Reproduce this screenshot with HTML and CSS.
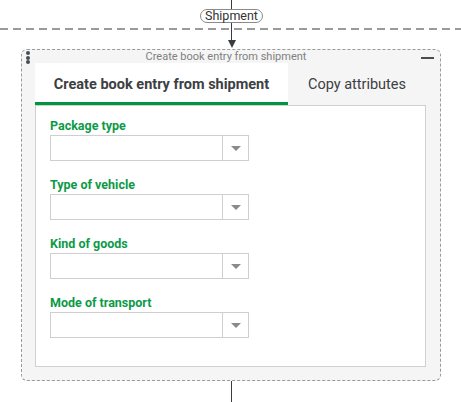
FILE: index.html
```html
<!DOCTYPE html>
<html>
<head>
<meta charset="utf-8">
<link rel="stylesheet" href="styles.css">
</head>
<body>
<div class="lane-divider"></div>
<div class="flow">
  <div class="line l1"></div>
  <div class="pill">Shipment</div>
  <div class="line l2"></div>
  <div class="arrowhead"></div>
</div>
<div class="panel">
  <div class="dots"><span></span><span></span><span></span></div>
  <div class="minus"></div>
  <div class="panel-title">Create book entry from shipment</div>
  <div class="tabs">
    <div class="tab active">Create book entry from shipment</div>
    <div class="tab">Copy attributes</div>
  </div>
  <div class="content">
    <div class="field">
      <div class="label">Package type</div>
      <div class="select"><div class="value"></div><div class="btn"><span class="tri"></span></div></div>
    </div>
    <div class="field">
      <div class="label">Type of vehicle</div>
      <div class="select"><div class="value"></div><div class="btn"><span class="tri"></span></div></div>
    </div>
    <div class="field">
      <div class="label">Kind of goods</div>
      <div class="select"><div class="value"></div><div class="btn"><span class="tri"></span></div></div>
    </div>
    <div class="field">
      <div class="label">Mode of transport</div>
      <div class="select"><div class="value"></div><div class="btn"><span class="tri"></span></div></div>
    </div>
  </div>
</div>
<div class="flow">
  <div class="line l3"></div>
</div>
</body>
</html>
```
FILE: styles.css
```css
html, body {
  margin: 0;
  padding: 0;
  overflow: hidden;
  background: #fff;
  font-family: Roboto, "Liberation Sans", sans-serif;
}
body {
  position: relative;
  width: 461px;
  height: 402px;
}
.lane-divider {
  position: absolute;
  left: 0;
  top: 28px;
  width: 461px;
  height: 2px;
  background: repeating-linear-gradient(to right, #9a9a9a 0 8px, transparent 8px 13px);
}
.flow {
  width: 463px;
  display: flex;
  flex-direction: column;
  align-items: center;
  position: relative;
}
.line {
  width: 1px;
  background: #3a3d40;
}
.l1 { height: 9px; }
.l2 { height: 17px; }
.l3 { height: 22px; }
.pill {
  height: 12px;
  line-height: 12px;
  font-size: 12.5px;
  color: #333;
  border: 1px solid #8a8a8a;
  border-radius: 8px;
  padding: 0 4px;
  background: #fff;
}
.arrowhead {
  width: 0;
  height: 0;
  border-left: 4px solid transparent;
  border-right: 4px solid transparent;
  border-top: 8px solid #3a3d40;
}
.panel {
  position: relative;
  box-sizing: border-box;
  margin-left: 21px;
  margin-top: 1px;
  width: 420px;
  height: 332px;
  border: 1px dashed #9a9a9a;
  border-radius: 6px;
  background: #f5f5f5;
  padding: 0 13px 0 13px;
}
.dots {
  position: absolute;
  left: 4px;
  top: 1px;
  display: flex;
  flex-direction: column;
  gap: 0.5px;
}
.dots span {
  width: 4px;
  height: 4px;
  border-radius: 50%;
  background: #4a4d50;
}
.minus {
  position: absolute;
  right: 6px;
  top: 7px;
  width: 13px;
  height: 2px;
  background: #4a4d50;
}
.panel-title {
  height: 13px;
  line-height: 13px;
  font-size: 11px;
  color: #808080;
  text-align: center;
  padding-right: 10px;
}
.tabs {
  display: flex;
  height: 42px;
  width: 391px;
}
.tab {
  flex: 1;
  display: flex;
  align-items: center;
  justify-content: center;
  font-size: 14.5px;
  color: #3c4043;
}
.tab.active {
  flex: 0 0 253px;
  box-sizing: border-box;
  background: #fff;
  border-bottom: 3px solid #00963f;
  font-weight: bold;
  padding-top: 3px;
}
.content {
  box-sizing: border-box;
  width: 391px;
  height: 262px;
  background: #fff;
  border: 1px solid #d0d0d0;
  padding: 13px 14px;
  display: flex;
  flex-direction: column;
  gap: 17px;
}
.label {
  font-size: 12.5px;
  line-height: 14px;
  font-weight: bold;
  color: #0c9a48;
  margin-bottom: 2px;
}
.select {
  box-sizing: border-box;
  display: flex;
  width: 199px;
  height: 26px;
  border: 1px solid #cfcfcf;
}
.value { flex: 1; }
.btn {
  width: 25px;
  border-left: 1px solid #cfcfcf;
  display: flex;
  align-items: center;
  justify-content: center;
}
.tri {
  width: 0;
  height: 0;
  border-left: 5px solid transparent;
  border-right: 5px solid transparent;
  border-top: 5px solid #8a8a8a;
}
```
